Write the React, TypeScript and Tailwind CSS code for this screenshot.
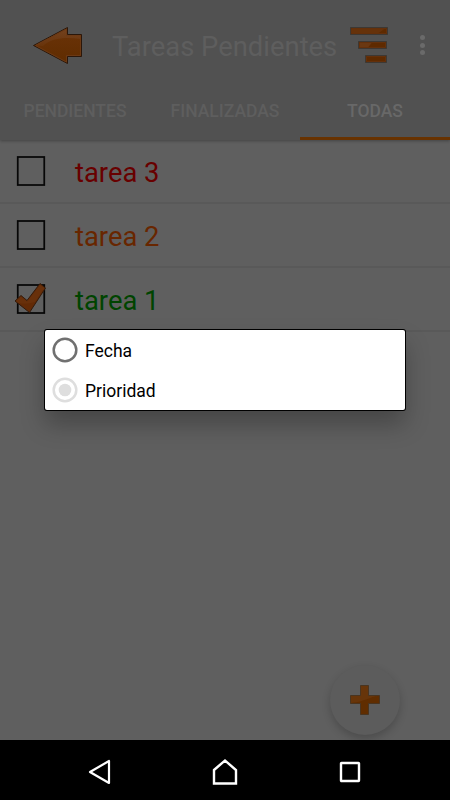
import { useState } from 'react';
import clsx from 'clsx';

type TabId = 'pending' | 'finished' | 'all';
type SortKey = 'fecha' | 'prioridad';

interface Task {
  name: string;
  done: boolean;
  color: string;
}

const TABS: { id: TabId; label: string }[] = [
  { id: 'pending', label: 'PENDIENTES' },
  { id: 'finished', label: 'FINALIZADAS' },
  { id: 'all', label: 'TODAS' },
];

const TASKS: Task[] = [
  { name: 'tarea 3', done: false, color: 'text-[#680000]' },
  { name: 'tarea 2', done: false, color: 'text-[#682600]' },
  { name: 'tarea 1', done: true, color: 'text-[#004400]' },
];

function BackArrow() {
  return (
    <svg width="52" height="40" viewBox="0 0 52 40" className="block">
      <defs>
        <linearGradient id="arrowFill" x1="0" y1="0" x2="0" y2="1">
          <stop offset="0" stopColor="#6b3309" />
          <stop offset="1" stopColor="#5f2c00" />
        </linearGradient>
        <linearGradient id="arrowShine" x1="0" y1="0" x2="0" y2="1">
          <stop offset="0" stopColor="#7c5034" />
          <stop offset="1" stopColor="#6d3912" />
        </linearGradient>
      </defs>
      <path d="M1.5 20.5 35.5 2.5V9.5H49.5V31.5H35.5V38.5Z" fill="url(#arrowFill)" stroke="#2b170a" strokeWidth="1" />
      <path d="M2.5 20.5 34.5 3.8V10.5H48.5V14C34 12 20 12.5 11 21Z" fill="url(#arrowShine)" opacity="0.5" />
      <path d="M3.5 20.5 34.5 4V10.5H48.5V30.5H34.5V37Z" fill="none" stroke="#6c3914" strokeWidth="1" />
    </svg>
  );
}

function SortIcon() {
  return (
    <svg width="38" height="36" viewBox="0 0 38 36" className="block">
      <g fill="#5e2a00" stroke="#3d3833" strokeWidth="1">
        <path d="M.5.5H37.5V7.5H.5Z" />
        <path d="M8.5 14.5H36.5V21.5H8.5Z" />
        <path d="M15.5 28.5H36.5V35.5H15.5Z" />
      </g>
      <path d="M1.5 1.5H35L28 6.5H1.5Z" fill="#6d3a14" opacity="0.5" />
      <path d="M9.5 15.5H22L18 20.5H9.5Z" fill="#754421" opacity="0.55" />
      <g fill="none" stroke="#64300b" strokeWidth="1">
        <path d="M1.5 1.5H36.5V6.5H1.5Z" />
        <path d="M9.5 15.5H35.5V20.5H9.5Z" />
        <path d="M16.5 29.5H35.5V34.5H16.5Z" />
      </g>
    </svg>
  );
}

function PlusIcon() {
  return (
    <svg width="30" height="30" viewBox="0 0 30 30" className="block">
      <path
        d="M10.5.5H18.5V10.5H29.5V18.5H18.5V29.5H10.5V18.5H.5V10.5H10.5Z"
        fill="#602d00"
        stroke="#493521"
        strokeWidth="1"
      />
      <path d="M1 11H11V1H18V11H28C20 11.5 17 16 1 18Z" fill="#74401a" opacity="0.4" />
    </svg>
  );
}

function TaskCheckbox({ checked }: { checked: boolean }) {
  return (
    <svg width="34" height="34" viewBox="0 0 34 34" className="block">
      <rect x="3.75" y="3" width="26.5" height="28" fill="none" stroke="#070707" strokeWidth="1.75" />
      {checked && (
        <>
          <path d="M1 19 7 13.5 13 18.5 26 1.5 31.5 6 15.5 30.5Z" fill="#622a06" stroke="#331b0c" strokeWidth="1" />
          <path d="M2 19 7 14.5 13 19.5 26 3 30.5 6 21 20C15 22 9 22 4 21Z" fill="#6d3610" opacity="0.5" />
        </>
      )}
    </svg>
  );
}

function SortOption({ label, checked, onSelect }: { label: string; checked: boolean; onSelect: () => void }) {
  return (
    <button
      type="button"
      role="radio"
      aria-checked={checked}
      onClick={onSelect}
      className="flex h-10 w-full items-center gap-[7px] pl-[7px] text-left"
    >
      <svg
        width="26"
        height="26"
        viewBox="0 0 26 26"
        className={clsx('block', checked ? 'text-[#dedede]' : 'text-[#707070]')}
      >
        <circle cx="13" cy="13" r="11.3" fill="none" stroke="currentColor" strokeWidth="2.5" />
        {checked && <circle cx="13" cy="13" r="6.3" fill="currentColor" />}
      </svg>
      <span className="pt-[3px] text-[17.5px] leading-none text-black">{label}</span>
    </button>
  );
}

function App() {
  const [activeTab, setActiveTab] = useState<TabId>('all');
  const [sortBy, setSortBy] = useState<SortKey>('prioridad');

  return (
    <div className="relative flex h-[800px] w-[450px] flex-col overflow-hidden bg-[#5f5f5f] font-[Roboto,sans-serif]">
      {/* Toolbar + tabs */}
      <header className="z-10 h-[140px] shrink-0 bg-[#515151] shadow-[0_1px_3px_rgba(0,0,0,0.3)]">
        <div className="flex h-[90px] items-center pl-8">
          <BackArrow />
          <h1 className="ml-7 w-[238px] pt-[5px] text-[27.4px] leading-none whitespace-nowrap text-[#5e5e5e]">
            Tareas Pendientes
          </h1>
          <SortIcon />
          <div className="ml-8 flex flex-col gap-[2.5px]">
            <span className="size-[5px] rounded-full bg-[#6a6a6a]" />
            <span className="size-[5px] rounded-full bg-[#6a6a6a]" />
            <span className="size-[5px] rounded-full bg-[#6a6a6a]" />
          </div>
        </div>
        <nav className="grid h-[50px] grid-cols-3">
          {TABS.map((tab) => (
            <button
              key={tab.id}
              type="button"
              onClick={() => setActiveTab(tab.id)}
              className={clsx(
                'border-b-[3px] pb-[4px] text-[17.5px] leading-none font-medium',
                activeTab === tab.id ? 'border-[#683200] text-[#686868]' : 'border-transparent text-[#5e5e5e]',
              )}
            >
              {tab.label}
            </button>
          ))}
        </nav>
      </header>

      {/* Task list */}
      <main className="flex-1">
        {TASKS.map((task) => (
          <div key={task.name} className="flex h-16 items-center border-b-2 border-[#595959] pl-[14px]">
            <TaskCheckbox checked={task.done} />
            <span className={clsx('ml-[27px] pt-[5px] text-[27.4px] leading-none', task.color)}>{task.name}</span>
          </div>
        ))}
      </main>

      {/* Floating add button */}
      <button
        type="button"
        aria-label="Agregar"
        className="absolute top-[665px] left-[330px] flex size-[70px] items-center justify-center rounded-full bg-[#5c5c5c] shadow-[0_4px_8px_rgba(0,0,0,0.2)]"
      >
        <PlusIcon />
      </button>

      {/* Sort popup */}
      <div
        role="radiogroup"
        className="absolute top-[330px] left-[45px] z-20 h-20 w-[360px] rounded-[2px] bg-white shadow-[0_0_0_1px_#000,0_14px_24px_rgba(0,0,0,0.27)]"
      >
        <SortOption label="Fecha" checked={sortBy === 'fecha'} onSelect={() => setSortBy('fecha')} />
        <SortOption label="Prioridad" checked={sortBy === 'prioridad'} onSelect={() => setSortBy('prioridad')} />
      </div>

      {/* System navigation bar */}
      <footer className="z-10 grid h-[60px] shrink-0 grid-cols-[200px_50px_200px] items-center justify-items-center bg-black pt-[4px] text-white">
        <svg width="24" height="26" viewBox="0 0 24 26" fill="none" stroke="currentColor" strokeWidth="2.2">
          <path d="M2 13 21 2V24Z" strokeLinejoin="round" />
        </svg>
        <svg width="26" height="28" viewBox="0 0 26 28" fill="none" stroke="currentColor" strokeWidth="2.4">
          <path d="M2 12 13 2.5 24 12V25.5H2Z" />
        </svg>
        <svg width="22" height="22" viewBox="0 0 22 22" fill="none" stroke="currentColor" strokeWidth="2.4">
          <rect x="2" y="2" width="18" height="18" rx="0.5" />
        </svg>
      </footer>
    </div>
  );
}

export default App;
